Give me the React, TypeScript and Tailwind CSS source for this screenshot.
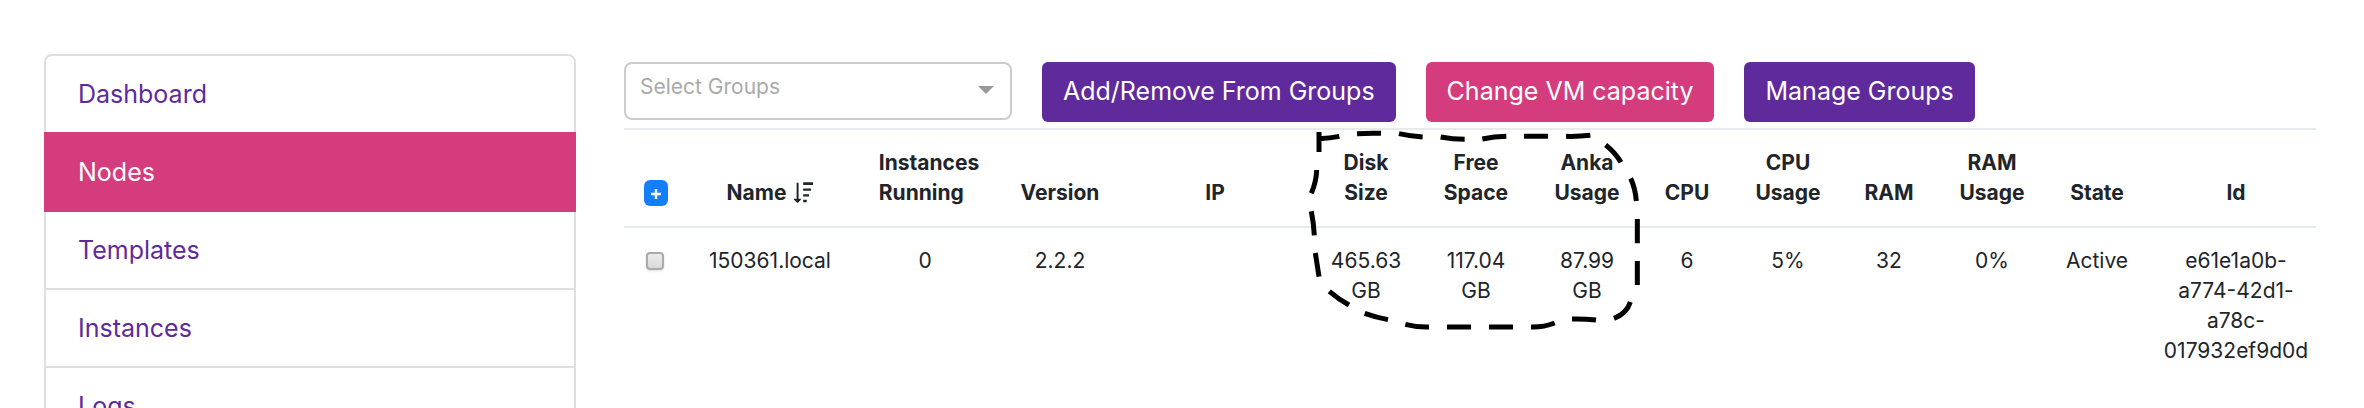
import React from "react";

const links = ["Dashboard", "Nodes", "Templates", "Instances", "Logs"];

function Sidebar({ active }: { active: string }) {
  return (
    <nav className="pt-[54px]">
      <ul className="rounded-t-lg border-2 border-[#dfdfdf]">
        {links.map((label) => (
          <li key={label}>
            {label === active ? (
              <a
                href="#"
                aria-current="page"
                className="relative -mx-0.5 -mt-0.5 flex h-20 items-center bg-[#d53c7e] px-[34px] pt-0.5 text-white"
              >
                {label}
              </a>
            ) : (
              <a
                href="#"
                className="flex h-[78px] items-center border-b-2 border-[#dfdfdf] px-8 pt-0.5 text-[#5f2a9b]"
              >
                {label}
              </a>
            )}
          </li>
        ))}
      </ul>
    </nav>
  );
}

function SortIcon() {
  return (
    <svg viewBox="0 0 58 64" className="ml-2 inline-block h-[21px] w-[19px] align-[-3px]" fill="#212529">
      <path d="M8 2h6v49h7v3L12.500 63h-3L0 54v-3h8z" />
      <path d="M28 1h30v8H28zM28 20h24v7H28zM28 37h18v7H28zM28 54h11v8H28z" />
    </svg>
  );
}

function Highlight() {
  return (
    <svg
      viewBox="0 0 1200 720"
      className="pointer-events-none absolute left-[656px] top-[110px] h-[240px] w-[400px]"
      fill="none"
      stroke="#000"
      strokeWidth="15"
    >
      <path d="M117 66V126M110 180Q109 215 94 250M94 304Q101 340 103 376M106 429L117 500M148 544Q175 567 207 585M254 610Q288 622 324 629M376 643Q410 652 447 651M501 651H573M627 651H699M753 651Q790 652 824 639M876 627Q912 626 948 630M1002 625Q1040 611 1051 576M1072 525V453M1072 400V327M1069 273Q1066 235 1052 205M1023 157Q1005 127 977 105M931 76Q895 80 858 79M804 79H732M679 79Q643 80 607 87M554 88Q518 88 482 81M428 81Q392 79 357 71M303 70Q267 69 231 71M178 79Q150 85 117 86" />
    </svg>
  );
}

const btn = "h-[60px] rounded-md px-[21px] text-[25px] text-white";

type Column = { title: string; value: string; width: string; left?: boolean };

const columns: Column[] = [
  { title: "Instances Running", value: "0", width: "w-[178px]", left: true },
  { title: "Version", value: "2.2.2", width: "w-[92px]" },
  { title: "IP", value: "", width: "w-[218px]" },
  { title: "Disk Size", value: "465.63 GB", width: "w-[84px]" },
  { title: "Free Space", value: "117.04 GB", width: "w-[136px]" },
  { title: "Anka Usage", value: "87.99 GB", width: "w-[86px]" },
  { title: "CPU", value: "6", width: "w-[114px]" },
  { title: "CPU Usage", value: "5%", width: "w-[88px]" },
  { title: "RAM", value: "32", width: "w-[114px]" },
  { title: "RAM Usage", value: "0%", width: "w-[92px]" },
  { title: "State", value: "Active", width: "w-[118px]" },
  { title: "Id", value: "e61e1a0b-a774-42d1-a78c-017932ef9d0d", width: "w-[160px]" },
];

function Lines({ text }: { text: string }) {
  return (
    <>
      {text.split(" ").map((word) => (
        <span key={word} className="block">
          {word}
        </span>
      ))}
    </>
  );
}

function NodesTable() {
  return (
    <table className="mt-1.5 w-full table-fixed border-collapse text-center text-[21px] leading-[30px] text-[#212529]">
      <colgroup>
        <col className="w-[80px]" />
        <col className="w-[132px]" />
        {columns.map((c) => (
          <col key={c.title} className={c.width} />
        ))}
      </colgroup>
      <thead>
        <tr className="border-y-2 border-[#e6eaee] align-bottom">
          <th className="pb-5 pl-5 text-left">
            <button
              type="button"
              aria-label="Select all"
              className="flex h-[26px] w-6 items-center justify-center rounded-md bg-[#157efb] pt-0.5"
            >
              <svg viewBox="0 0 10 10" className="h-2.5 w-2.5" fill="none" stroke="#fff" strokeWidth="2.500">
                <path d="M5 0V10M0 5H10" />
              </svg>
            </button>
          </th>
          <th className="whitespace-nowrap py-[18px] font-bold">
            Name
            <SortIcon />
          </th>
          {columns.map((c) => (
            <th key={c.title} className="py-[18px] font-bold">
              <span className={c.left ? "inline-block pl-2 text-left align-bottom" : "block"}>
                <Lines text={c.title} />
              </span>
            </th>
          ))}
        </tr>
      </thead>
      <tbody>
        <tr className="align-top">
          <td className="py-[18px] pl-[22px] text-left">
            <input
              type="checkbox"
              aria-label="Select 150361.local"
              className="mt-1.5 block h-[18px] w-[18px] appearance-none rounded border-2 border-[#aaa] bg-linear-to-b from-[#ececec] to-[#dadada] shadow-sm"
            />
          </td>
          <td className="whitespace-nowrap py-[18px]">150361.local</td>
          {columns.map((c) => (
            <td key={c.title} className="px-1 py-[18px]">
              <Lines text={c.value} />
            </td>
          ))}
        </tr>
      </tbody>
    </table>
  );
}

export default function App() {
  return (
    <div className="grid h-screen grid-cols-[532fr_1692fr] gap-12 overflow-hidden bg-white pl-11 pr-12 font-['Inter',sans-serif] text-[25px]">
      <Sidebar active="Nodes" />
      <main className="relative pt-[62px]">
        <div className="flex items-start gap-[30px]">
          <div className="relative w-[388px]">
            <select
              aria-label="Select Groups"
              className="h-[58px] w-full appearance-none rounded-lg border-2 border-[#ccc] bg-white px-3.5 pb-2 text-[21px] text-[#aaa]"
            >
              <option>Select Groups</option>
            </select>
            <svg viewBox="0 0 16 8" className="pointer-events-none absolute right-[18px] top-6 h-2 w-4" fill="#999">
              <path d="M0 0H16L8 8z" />
            </svg>
          </div>
          <button type="button" className={`${btn} bg-[#5f2a9b]`}>Add/Remove From Groups</button>
          <button type="button" className={`${btn} bg-[#d53c7e]`}>Change VM capacity</button>
          <button type="button" className={`${btn} bg-[#5f2a9b]`}>Manage Groups</button>
        </div>
        <NodesTable />
        <Highlight />
      </main>
    </div>
  );
}
